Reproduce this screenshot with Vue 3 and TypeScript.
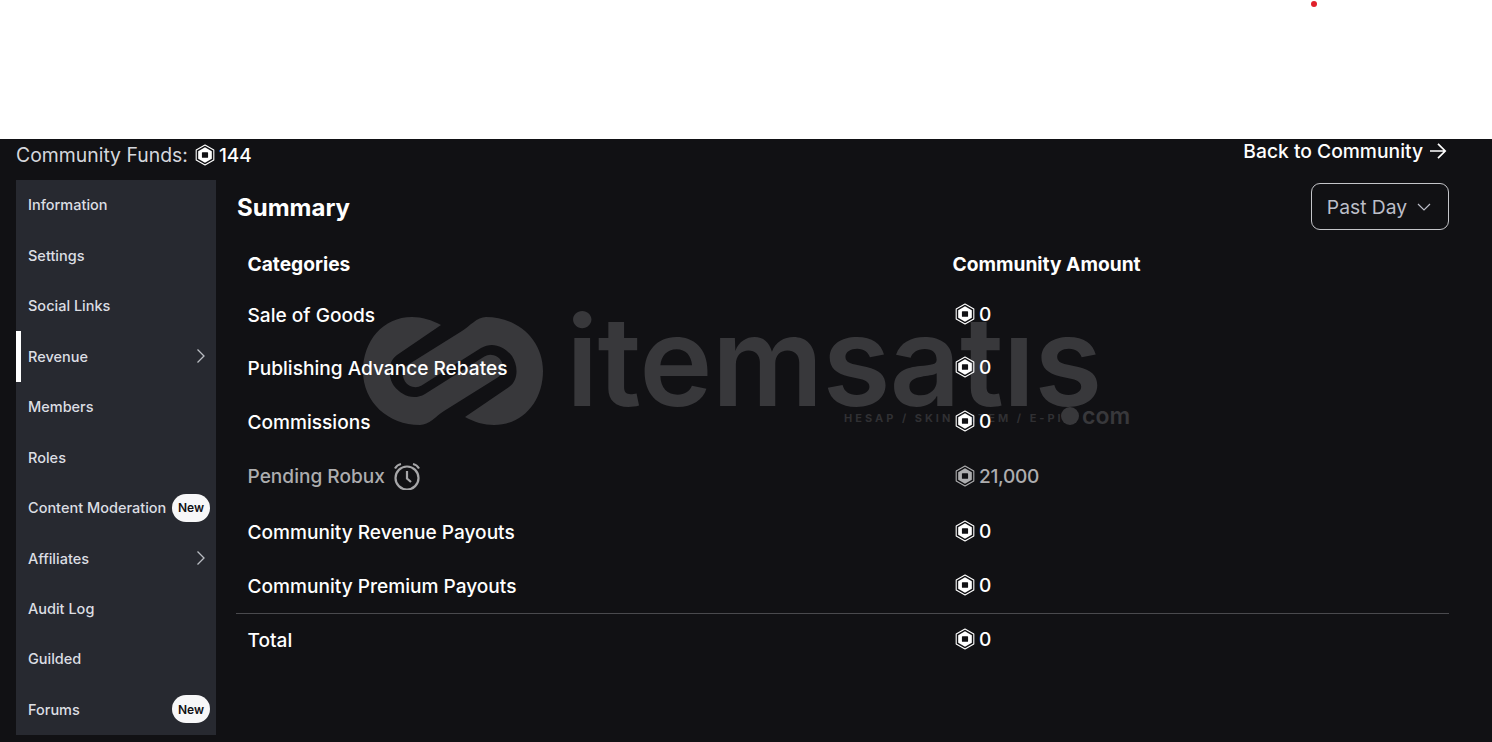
<template>
  <div class="topbar"><span class="dot"></span></div>
  <div class="page">
    <div class="header">
      <div class="funds">
        Community Funds:
        <svg class="robux" viewBox="0 0 20 20"><use href="#robux-icon" /></svg>
        <span class="funds-value">144</span>
      </div>
      <a class="back">
        Back to Community
        <svg class="arrow" viewBox="0 0 18 18" fill="none" stroke="#fff" stroke-width="1.7">
          <path d="M1 9h15M9 1.800 16.200 9 9 16.200" />
        </svg>
      </a>
    </div>
    <div class="content">
      <nav class="sidebar">
        <div v-for="item in menu" :key="item.label" class="menu-item" :class="{ active: item.active }">
          <span>{{ item.label }}</span>
          <span v-if="item.badge" class="badge">New</span>
          <svg v-if="item.sub" class="chevron" viewBox="0 0 10 16" fill="none" stroke="#b9bcc2" stroke-width="1.300">
            <path d="M1.500 1.500 8 8l-6.500 6.500" />
          </svg>
        </div>
      </nav>
      <main class="main">
        <div class="watermark">
          <svg class="wm-logo" viewBox="0 0 182 110" fill="#38383b">
            <path id="wm-link" d="M78 8C69 3 59 0 49 0 20 0 0 24 0 54 0 85 25 108 57 108 66 108 73 99 81 94L134.600 60.600A12.500 12.500 0 0 0 121.400 39.400L62 77C50 84 38 78 31 69 25 60 24 45 34 38L78 8Z" />
            <use href="#wm-link" transform="rotate(180 90 54)" />
          </svg>
          <span class="wm-word">itemsatıs</span>
          <span class="wm-sub">HESAP / SKIN / ITEM / E-PIN</span>
          <span class="wm-dot"></span>
          <span class="wm-com">com</span>
        </div>
        <div class="summary-head">
          <h2>Summary</h2>
          <div class="select">
            Past Day
            <svg viewBox="0 0 14 8" class="caret" fill="none" stroke="#bcbec8" stroke-width="1.200">
              <path d="M1 1l6 6 6-6" />
            </svg>
          </div>
        </div>
        <table class="summary">
          <thead>
            <tr>
              <th>Categories</th>
              <th>Community Amount</th>
            </tr>
          </thead>
          <tbody>
            <tr v-for="row in rows" :key="row.name" :class="{ pending: row.pending, total: row.total }">
              <td>
                <span class="name">
                  {{ row.name }}
                  <svg v-if="row.pending" class="clock" viewBox="0 0 28 28" fill="none" stroke="#a6a6a8" stroke-width="2.200">
                    <circle cx="14" cy="16" r="11.500" />
                    <path d="M14 9v7.500l4 3.500" />
                    <path d="M2 6.500C3.500 3.800 5.500 2.500 8 2M26 6.500C24.500 3.800 22.500 2.500 20 2" />
                  </svg>
                </span>
              </td>
              <td>
                <span class="amount">
                  <svg class="robux" viewBox="0 0 20 20"><use href="#robux-icon" /></svg>
                  {{ row.amount }}
                </span>
              </td>
            </tr>
          </tbody>
        </table>
      </main>
    </div>
    <svg width="0" height="0" class="defs">
      <defs>
        <g id="robux-icon">
          <path d="M10 .9l8 4.600v9l-8 4.600-8-4.600v-9z" fill="none" stroke="currentColor" stroke-width="1" stroke-linejoin="round" />
          <path fill-rule="evenodd" d="M10 2.900l6.200 3.600v7L10 17.100l-6.200-3.600v-7zM7.800 7.400a.6.6 0 0 0-.6.6v4a.6.6 0 0 0 .6.6h4.400a.6.6 0 0 0 .6-.6V8a.6.6 0 0 0-.6-.6z" fill="currentColor" />
        </g>
      </defs>
    </svg>
  </div>
</template>

<script setup lang="ts">
interface MenuItem {
  label: string;
  active?: boolean;
  sub?: boolean;
  badge?: boolean;
}
interface Row {
  name: string;
  amount: string;
  pending?: boolean;
  total?: boolean;
}

const menu: MenuItem[] = [
  { label: "Information" },
  { label: "Settings" },
  { label: "Social Links" },
  { label: "Revenue", active: true, sub: true },
  { label: "Members" },
  { label: "Roles" },
  { label: "Content Moderation", badge: true },
  { label: "Affiliates", sub: true },
  { label: "Audit Log" },
  { label: "Guilded" },
  { label: "Forums", badge: true },
];

const rows: Row[] = [
  { name: "Sale of Goods", amount: "0" },
  { name: "Publishing Advance Rebates", amount: "0" },
  { name: "Commissions", amount: "0" },
  { name: "Pending Robux", amount: "21,000", pending: true },
  { name: "Community Revenue Payouts", amount: "0" },
  { name: "Community Premium Payouts", amount: "0" },
  { name: "Total", amount: "0", total: true },
];
</script>

<style>
html,
body {
  margin: 0;
  background: #111114;
}
</style>

<style scoped>
.topbar {
  height: 139px;
  background: #fff;
  position: relative;
}
.dot {
  position: absolute;
  left: 1311px;
  top: 1px;
  width: 6px;
  height: 6px;
  border-radius: 50%;
  background: #e0202a;
}
.page {
  height: 603px;
  background: #111114;
  color: #fff;
  font-family: Inter, "Noto Sans", sans-serif;
  padding: 0 43px 0 16px;
  box-sizing: border-box;
  overflow: hidden;
}
.defs {
  position: absolute;
}
.header {
  display: flex;
  justify-content: space-between;
  align-items: flex-start;
  height: 41px;
}
.funds {
  display: flex;
  align-items: center;
  gap: 6px;
  font-size: 19.400px;
  color: #d5d7dd;
  margin-top: 4px;
  height: 24px;
}
.funds-value {
  color: #fff;
  font-weight: 500;
  font-size: 19px;
  margin-left: -3px;
}
.robux {
  width: 22px;
  height: 22px;
  color: #fff;
  flex: none;
}
.back {
  display: flex;
  align-items: center;
  gap: 6px;
  font-size: 19.250px;
  font-weight: 500;
  color: #fff;
  height: 24px;
  margin-right: 2px;
}
.arrow {
  width: 18px;
  height: 18px;
}
.content {
  display: flex;
  gap: 20px;
}
.sidebar {
  width: 200px;
  height: 555px;
  background: #272930;
  display: grid;
  grid-template-rows: repeat(11, 1fr);
  flex: none;
}
.menu-item {
  display: flex;
  align-items: center;
  justify-content: space-between;
  padding: 0 6px 0.800px 12px;
  font-size: 14.500px;
  font-weight: 500;
  color: #dcdee3;
  position: relative;
}
.menu-item.active::before {
  content: "";
  position: absolute;
  left: 0;
  top: 0;
  bottom: 0;
  width: 5px;
  background: #fff;
}
.badge {
  width: 38px;
  height: 28px;
  border-radius: 14px;
  background: #f7f7f8;
  color: #111114;
  font-size: 12px;
  font-weight: 600;
  display: flex;
  align-items: center;
  justify-content: center;
  flex: none;
}
.chevron {
  width: 10px;
  height: 16px;
  margin-right: 4px;
}
.main {
  flex: 1;
  position: relative;
}
.watermark {
  position: absolute;
  left: 127px;
  top: 137px;
  width: 780px;
  height: 120px;
}
.wm-logo {
  position: absolute;
  left: 0;
  top: 0;
  width: 182px;
  height: 110px;
}
.wm-word {
  position: absolute;
  left: 203px;
  top: -31px;
  font-size: 124px;
  line-height: 150px;
  font-weight: 600;
  letter-spacing: -0.900px;
  color: #38383b;
}
.wm-sub {
  position: absolute;
  left: 481px;
  top: 94px;
  font-size: 11px;
  line-height: 14px;
  font-weight: 700;
  letter-spacing: 3px;
  white-space: nowrap;
  color: #303033;
}
.wm-dot {
  position: absolute;
  left: 698px;
  top: 90px;
  width: 18px;
  height: 18px;
  border-radius: 50%;
  background: #38383b;
}
.wm-com {
  position: absolute;
  left: 719px;
  top: 87px;
  font-size: 23px;
  line-height: 24px;
  font-weight: 600;
  color: #38383b;
}
.summary-head {
  position: relative;
  display: flex;
  justify-content: space-between;
  align-items: center;
  height: 50px;
  padding-top: 3px;
  box-sizing: border-box;
  margin-bottom: 10px;
}
h2 {
  margin: 2px 0 0 1px;
  font-size: 24px;
  font-weight: 700;
  color: #fff;
}
.select {
  width: 138px;
  height: 47px;
  box-sizing: border-box;
  border: 1px solid #c4c5c9;
  border-radius: 9px;
  display: flex;
  align-items: center;
  justify-content: center;
  gap: 10px;
  padding: 2px 2px 0 0;
  font-size: 19.300px;
  color: #bcbec8;
  margin-top: -1px;
}
.caret {
  width: 14px;
  height: 8px;
}
.summary {
  position: relative;
  width: 100%;
  border-collapse: collapse;
  table-layout: fixed;
}
th {
  text-align: left;
  font-size: 19.200px;
  font-weight: 700;
  padding: 0 11.500px;
  height: 48px;
}
th:first-child,
td:first-child {
  width: 682px;
}
td {
  padding: 0 11.500px;
  height: 53.500px;
  font-size: 19.100px;
  font-weight: 450;
  color: #fff;
}
.name {
  display: inline-flex;
  align-items: center;
  gap: 8px;
}
.amount {
  display: inline-flex;
  align-items: center;
  gap: 3.500px;
  padding-left: 1px;
  letter-spacing: -0.3px;
  position: relative;
  top: 1px;
}
.pending td {
  color: #adadaf;
  height: 57px;
}
.pending .name {
  position: relative;
  top: -1px;
}
.pending .robux {
  color: #adadaf;
}
.clock {
  width: 28px;
  height: 28px;
}
.total td {
  border-top: 1px solid #4a4a4e;
}
</style>
